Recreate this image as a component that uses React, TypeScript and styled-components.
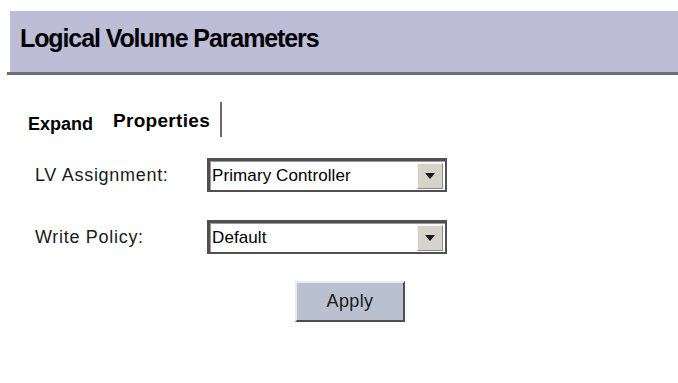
import styled, { createGlobalStyle } from "styled-components";

const GlobalStyle = createGlobalStyle`
    body {
        margin: 0;
        background: #ffffff;
        font-family: "Liberation Sans", Arial, sans-serif;
        color: #000000;
    }
`;

const Page = styled.div`
    width: 678px;
    height: 383px;
    overflow: hidden;
    padding-top: 11px;
    box-sizing: border-box;
`;

const Header = styled.div`
    margin-left: 7px;
    border-bottom: 3px solid #6e6e72;
`;

const Band = styled.div`
    margin-left: 3px;
    height: 61px;
    background: #bdbdd7;
    box-sizing: border-box;
    padding: 15px 0 0 10px;
`;

const Title = styled.h1`
    margin: 0;
    font-size: 25px;
    line-height: 25px;
    font-weight: bold;
    letter-spacing: -1.1px;
`;

const Tabs = styled.div`
    display: flex;
    align-items: flex-start;
    margin-top: 27px;
    padding-left: 28px;
    height: 35px;
`;

const Tab = styled.span<{ $active?: boolean }>`
    font-weight: bold;
    font-size: ${(p) => (p.$active ? "19px" : "18px")};
    line-height: ${(p) => (p.$active ? "19px" : "18px")};
    margin-top: ${(p) => (p.$active ? "9px" : "13px")};
    margin-right: ${(p) => (p.$active ? "10px" : "20px")};
    letter-spacing: ${(p) => (p.$active ? "0.3px" : "0")};
`;

const TabDivider = styled.span`
    width: 2px;
    height: 35px;
    background: #6a6a6a;
`;

const Form = styled.div`
    display: flex;
    flex-direction: column;
    gap: 28px;
    margin-top: 21px;
    padding-left: 35px;
`;

const Row = styled.div`
    display: flex;
    align-items: center;
`;

const Label = styled.span`
    width: 172px;
    font-size: 18px;
    letter-spacing: 0.7px;
    color: #1a1a1a;
`;

const Select = styled.div`
    width: 240px;
    height: 34px;
    box-sizing: border-box;
    display: flex;
    align-items: center;
    border: 2px solid #505050;
    border-top-width: 3px;
    border-left-width: 3px;
    box-shadow: inset 1px 1px 0 #9a9a9a;
    background: #ffffff;
    padding: 0 2px 0 2px;
`;

const SelectValue = styled.span`
    flex: 1;
    font-size: 17px;
    letter-spacing: 0.1px;
`;

const ArrowButton = styled.div`
    width: 26px;
    height: 26px;
    box-sizing: border-box;
    background: #d6d3ca;
    border: 1px solid;
    border-color: #f4f4f0 #8a8a86 #8a8a86 #f4f4f0;
    display: flex;
    align-items: center;
    justify-content: center;
`;

const Arrow = styled.span`
    width: 0;
    height: 0;
    border-left: 5px solid transparent;
    border-right: 5px solid transparent;
    border-top: 6px solid #1a1a1a;
    margin-top: 1px;
`;

const ButtonRow = styled.div`
    padding-left: 260px;
    margin-top: -1px;
`;

const ApplyButton = styled.button`
    width: 110px;
    height: 41px;
    box-sizing: border-box;
    background: #b9c1d1;
    border: 2px solid;
    border-color: #e8ecf2 #4e4e52 #4e4e52 #e8ecf2;
    font-family: "Liberation Sans", Arial, sans-serif;
    font-size: 18px;
    letter-spacing: 0.4px;
    color: #1a1a1a;
    padding: 0;
`;

const fields = [
    { label: "LV Assignment:", value: "Primary Controller" },
    { label: "Write Policy:", value: "Default" },
];

export default function App() {
    return (
        <Page>
            <GlobalStyle />
            <Header>
                <Band>
                    <Title>Logical Volume Parameters</Title>
                </Band>
            </Header>
            <Tabs>
                <Tab>Expand</Tab>
                <Tab $active>Properties</Tab>
                <TabDivider />
            </Tabs>
            <Form>
                {fields.map((f) => (
                    <Row key={f.label}>
                        <Label>{f.label}</Label>
                        <Select>
                            <SelectValue>{f.value}</SelectValue>
                            <ArrowButton>
                                <Arrow />
                            </ArrowButton>
                        </Select>
                    </Row>
                ))}
                <ButtonRow>
                    <ApplyButton>Apply</ApplyButton>
                </ButtonRow>
            </Form>
        </Page>
    );
}
